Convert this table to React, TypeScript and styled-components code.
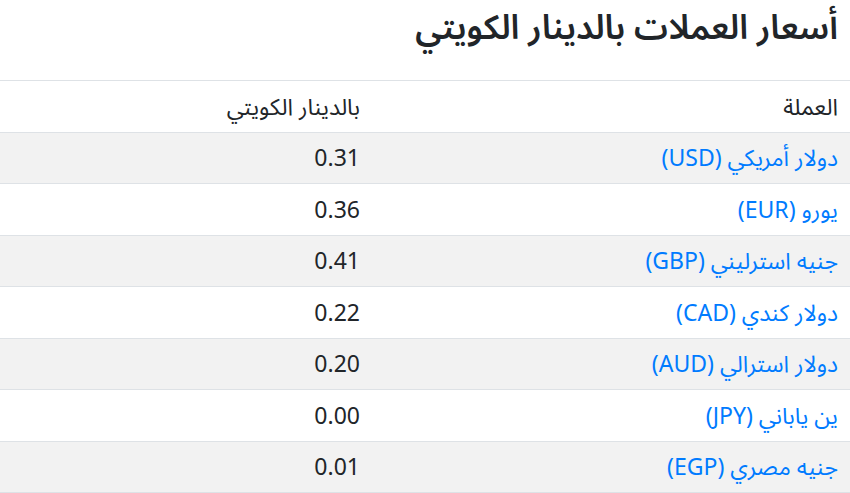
import styled, { createGlobalStyle } from 'styled-components';

const GlobalStyle = createGlobalStyle`
	html, body {
		margin: 0;
		padding: 0;
		background: #fff;
	}
	body {
		font-family: 'Noto Sans', 'Noto Sans Arabic', 'DejaVu Sans', sans-serif;
		font-size: 23px;
		line-height: 33px;
		color: #212529;
	}
`;

const Page = styled.div`
	direction: rtl;
	width: 850px;
`;

const Title = styled.h2`
	margin: 0;
	padding: 4px 12px 0;
	height: 76px;
	font-size: 34px;
	font-weight: 600;
	line-height: 1.3;
	color: #212529;
`;

const Table = styled.table`
	width: 100%;
	border-collapse: collapse;
	text-align: right;
`;

const HeadCell = styled.th<{ $width?: number }>`
	width: ${(p) => (p.$width ? `${p.$width}px` : 'auto')};
	font-weight: 400;
	padding: 8.75px 12px;
	border-top: 1px solid #dee2e6;
	border-bottom: 1px solid #dee2e6;
	text-align: right;
	vertical-align: top;
`;

const Row = styled.tr<{ $striped: boolean }>`
	background: ${(p) => (p.$striped ? '#f2f2f2' : '#fff')};
`;

const Cell = styled.td`
	padding: 8.75px 12px;
	border-bottom: 1px solid #dee2e6;
	vertical-align: top;
`;

const CurrencyLink = styled.a`
	color: #007bff;
	text-decoration: none;
`;

const rates = [
	{ name: 'دولار أمريكي (USD)', value: '0.31' },
	{ name: 'يورو (EUR)', value: '0.36' },
	{ name: 'جنيه استرليني (GBP)', value: '0.41' },
	{ name: 'دولار كندي (CAD)', value: '0.22' },
	{ name: 'دولار استرالي (AUD)', value: '0.20' },
	{ name: 'ين ياباني (JPY)', value: '0.00' },
	{ name: 'جنيه مصري (EGP)', value: '0.01' },
];

export default function App() {
	return (
		<>
			<GlobalStyle />
			<Page>
				<Title>أسعار العملات بالدينار الكويتي</Title>
				<Table>
					<thead>
						<tr>
							<HeadCell $width={454}>العملة</HeadCell>
							<HeadCell>بالدينار الكويتي</HeadCell>
						</tr>
					</thead>
					<tbody>
						{rates.map((r, i) => (
							<Row key={r.name} $striped={i % 2 === 0}>
								<Cell>
									<CurrencyLink href='#'>{r.name}</CurrencyLink>
								</Cell>
								<Cell>{r.value}</Cell>
							</Row>
						))}
					</tbody>
				</Table>
			</Page>
		</>
	);
}
